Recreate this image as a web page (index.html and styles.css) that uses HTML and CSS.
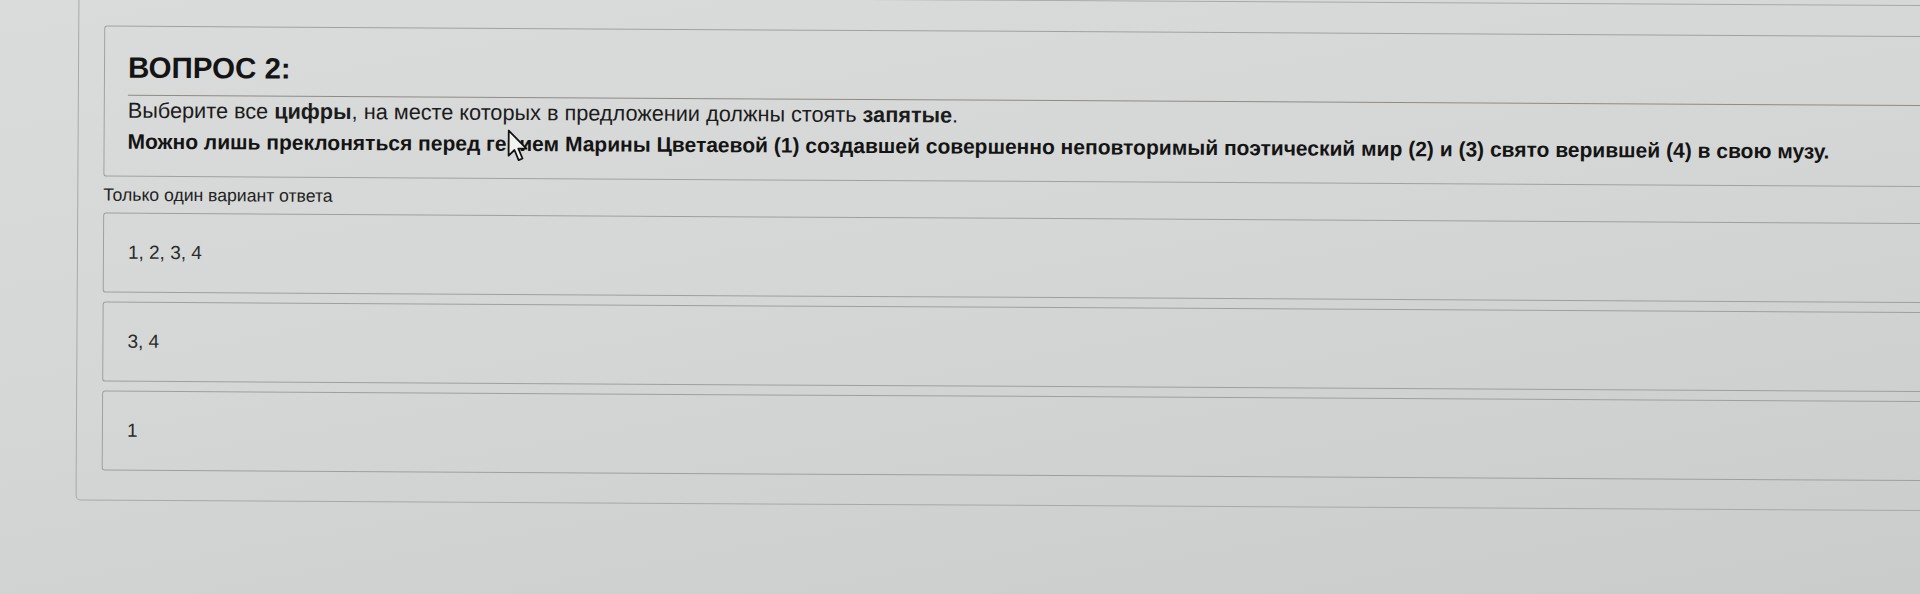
FILE: index.html
```html
<!DOCTYPE html>
<html lang="ru">
<head>
<meta charset="utf-8">
<title>Вопрос 2</title>
<link rel="stylesheet" href="styles.css">
</head>
<body>
<div class="page">
  <div class="quiz">
    <div class="question">
      <div class="q-head">ВОПРОС 2:</div>
      <div class="q-task">Выберите все <b>цифры</b>, на месте которых в предложении должны стоять <b>запятые</b>.</div>
      <div class="q-text">Можно лишь преклоняться перед гением Марины Цветаевой (1) создавшей совершенно неповторимый поэтический мир (2) и (3) свято верившей (4) в свою музу.</div>
    </div>
    <div class="hint">Только один вариант ответа</div>
    <div class="options">
      <div class="option">1, 2, 3, 4</div>
      <div class="option">3, 4</div>
      <div class="option">1</div>
    </div>
  </div>
  <svg class="cursor" width="22" height="34" viewBox="0 0 13 21" aria-hidden="true">
    <path d="M1 1 L1 16.5 L4.6 13 L7.2 19.2 L9.6 18.2 L7 12.1 L12 12.1 Z" fill="#f2f2f2" stroke="#111" stroke-width="1.1" stroke-linejoin="round"/>
  </svg>
</div>
</body>
</html>
```

FILE: styles.css
```css
html, body {
  margin: 0;
  height: 100%;
}

body {
  background: linear-gradient(170deg, #dadcdb 0%, #d5d7d6 45%, #cacccb 100%);
  font-family: "Liberation Sans", Arial, sans-serif;
  color: #1b1b1b;
  overflow: hidden;
}

.page {
  position: relative;
  padding-left: 77px;
  transform: rotate(0.33deg);
  transform-origin: 0 250px;
}

.quiz {
  width: 2000px;
  margin-top: -6px;
  padding: 30px 0 29px 25px;
  border: 1px solid #a7a9a8;
  border-radius: 5px;
}

.question {
  border: 1px solid #a0a2a1;
  border-radius: 3px;
  padding: 24px 0 17px 23px;
}

.q-head {
  font-size: 29.5px;
  font-weight: bold;
  line-height: 34px;
  padding-bottom: 10px;
  border-bottom: 1px solid #8f8b85;
  color: #141414;
}

.q-task,
.q-text {
  font-size: 21.7px;
  line-height: 34px;
  color: #1c1c1c;
  white-space: nowrap;
}

.q-task {
  margin-top: -2px;
}

.q-task b {
  font-weight: bold;
}

.q-text {
  font-weight: bold;
  font-size: 21px;
  margin-top: -3px;
  color: #141414;
}

.hint {
  font-size: 17.6px;
  line-height: 20px;
  margin: 8px 0 8px;
  color: #222;
}

.options {
  display: flex;
  flex-direction: column;
  gap: 9px;
}

.option {
  height: 78px;
  display: flex;
  align-items: center;
  padding-left: 24px;
  border: 1px solid #9ea09f;
  border-radius: 3px;
  font-size: 19px;
  color: #2a2a2a;
}

.cursor {
  position: absolute;
  left: 506px;
  top: 132px;
}
```
